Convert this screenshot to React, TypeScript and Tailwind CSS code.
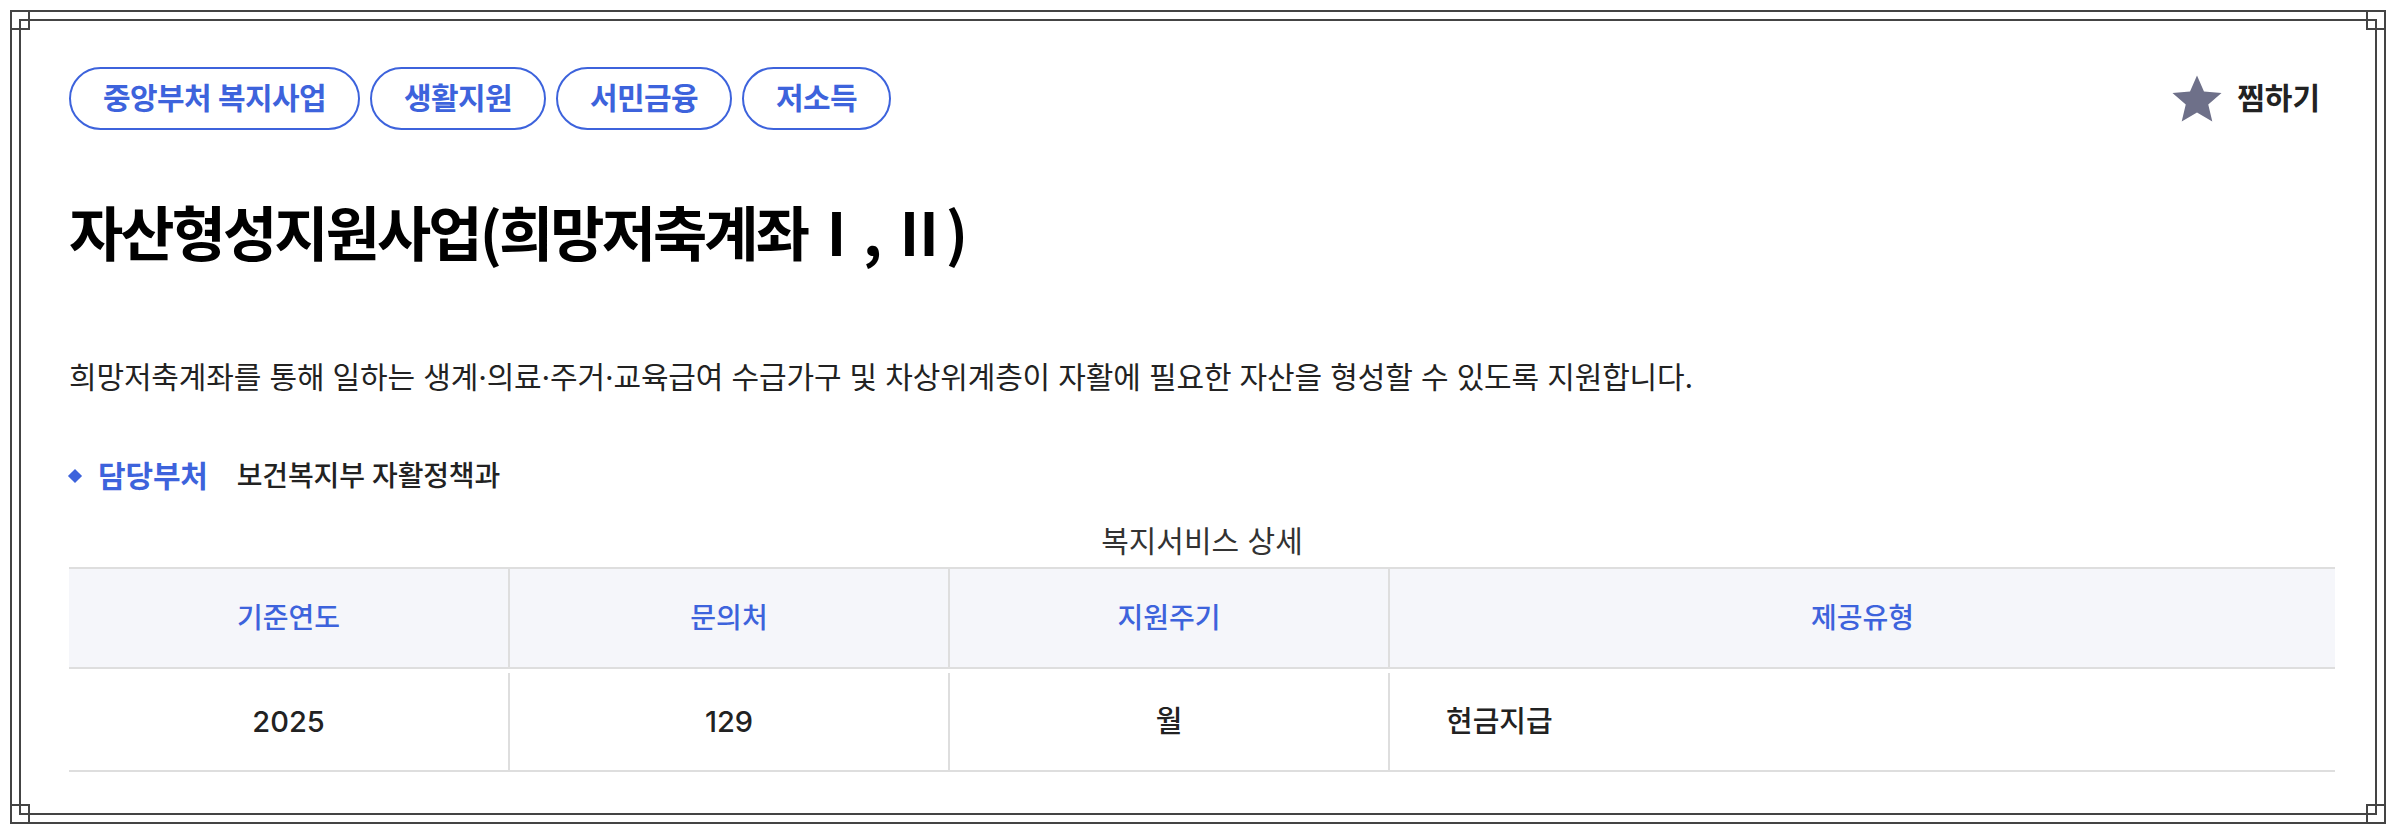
import React from "react";

const tags = ["중앙부처 복지사업", "생활지원", "서민금융", "저소득"];

const cols = [
  { head: "기준연도", value: "2025", w: "w-[439px]", align: "justify-center" },
  { head: "문의처", value: "129", w: "w-[440px]", align: "justify-center" },
  { head: "지원주기", value: "월", w: "w-[440px]", align: "justify-center" },
  { head: "제공유형", value: "현금지급", w: "flex-1", align: "justify-start pl-[56px]" },
];

const Corner = ({ pos }: { pos: string }) => (
  <div className={`absolute w-[20px] h-[20px] border-2 border-[#444] ${pos}`} />
);

const App = () => {
  return (
    <div className="w-[2396px] h-[834px] bg-white p-[10px] relative font-['Inter','Noto_Sans_CJK_KR',sans-serif]">
      <div className="h-full border-2 border-[#444] p-[7px]">
        <div className="h-full border-2 border-[#444] pl-[48px] pr-[40px] pt-[46px]">
          {/* tags + 찜하기 */}
          <div className="flex items-center justify-between">
            <div className="flex gap-[10px]">
              {tags.map((t) => (
                <span
                  key={t}
                  className="h-[63px] px-[32px] flex items-center rounded-full border-2 border-[#3d63dc] text-[#3d63dc] text-[30px] font-semibold tracking-[-0.02em]"
                >
                  {t}
                </span>
              ))}
            </div>
            <button className="flex items-center gap-[12px] mr-[15px] text-[30px] font-bold text-[#222]">
              <svg width="56" height="54" viewBox="0 0 24 24">
                <path
                  d="M12 1.5l3.1 7.2 7.8.6-5.9 5.1 1.8 7.6L12 18l-6.8 4 1.8-7.6-5.9-5.1 7.8-.6z"
                  fill="#6e7089"
                />
              </svg>
              찜하기
            </button>
          </div>

          {/* title */}
          <h1 className="mt-[63px] text-[59px] leading-[76px] font-bold text-black tracking-[-0.05em] font-['Noto_Sans_CJK_KR',sans-serif]">
            자산형성지원사업(희망저축계좌Ⅰ, Ⅱ)
          </h1>

          {/* description */}
          <p className="mt-[88px] text-[30px] leading-[40px] text-[#222] tracking-[-0.005em]">
            희망저축계좌를 통해 일하는 생계·의료·주거·교육급여 수급가구 및 차상위계층이 자활에 필요한 자산을 형성할 수 있도록 지원합니다.
          </p>

          {/* 담당부처 */}
          <div className="mt-[59px] flex items-center leading-[40px] tracking-[-0.01em]">
            <span className="w-[10px] h-[10px] bg-[#3d63dc] rotate-45 ml-[1px] mr-[18px]" />
            <span className="text-[#3d63dc] text-[30px] font-semibold">담당부처</span>
            <span className="ml-[29px] text-[28px] text-[#222] font-medium">보건복지부 자활정책과</span>
          </div>

          {/* table */}
          <div className="mt-[27px]">
            <div className="text-center text-[30px] leading-[36px] text-[#333] mb-[8px]">복지서비스 상세</div>
            <div className="border-t-2 border-b-2 border-[#dedede]">
              <div className="flex bg-[#f5f6fa] border-b-2 border-[#dedede] h-[100px]">
                {cols.map((c, i) => (
                  <div
                    key={c.head}
                    className={`${c.w} flex items-center justify-center text-[28px] font-medium text-[#3d63dc] ${i > 0 ? "border-l-2 border-[#dedede]" : ""}`}
                  >
                    {c.head}
                  </div>
                ))}
              </div>
              <div className="flex h-[101px]">
                {cols.map((c, i) => (
                  <div key={c.head} className={`${c.w} flex pt-[4px]`}>
                    <div
                      className={`flex-1 flex items-center ${c.align} text-[29px] font-medium text-[#222] ${i > 0 ? "border-l-2 border-[#dedede]" : ""}`}
                    >
                      {c.value}
                    </div>
                  </div>
                ))}
              </div>
            </div>
          </div>
        </div>
      </div>
      <Corner pos="top-[10px] left-[10px]" />
      <Corner pos="top-[10px] right-[10px]" />
      <Corner pos="bottom-[10px] left-[10px]" />
      <Corner pos="bottom-[10px] right-[10px]" />
    </div>
  );
};

export default App;
